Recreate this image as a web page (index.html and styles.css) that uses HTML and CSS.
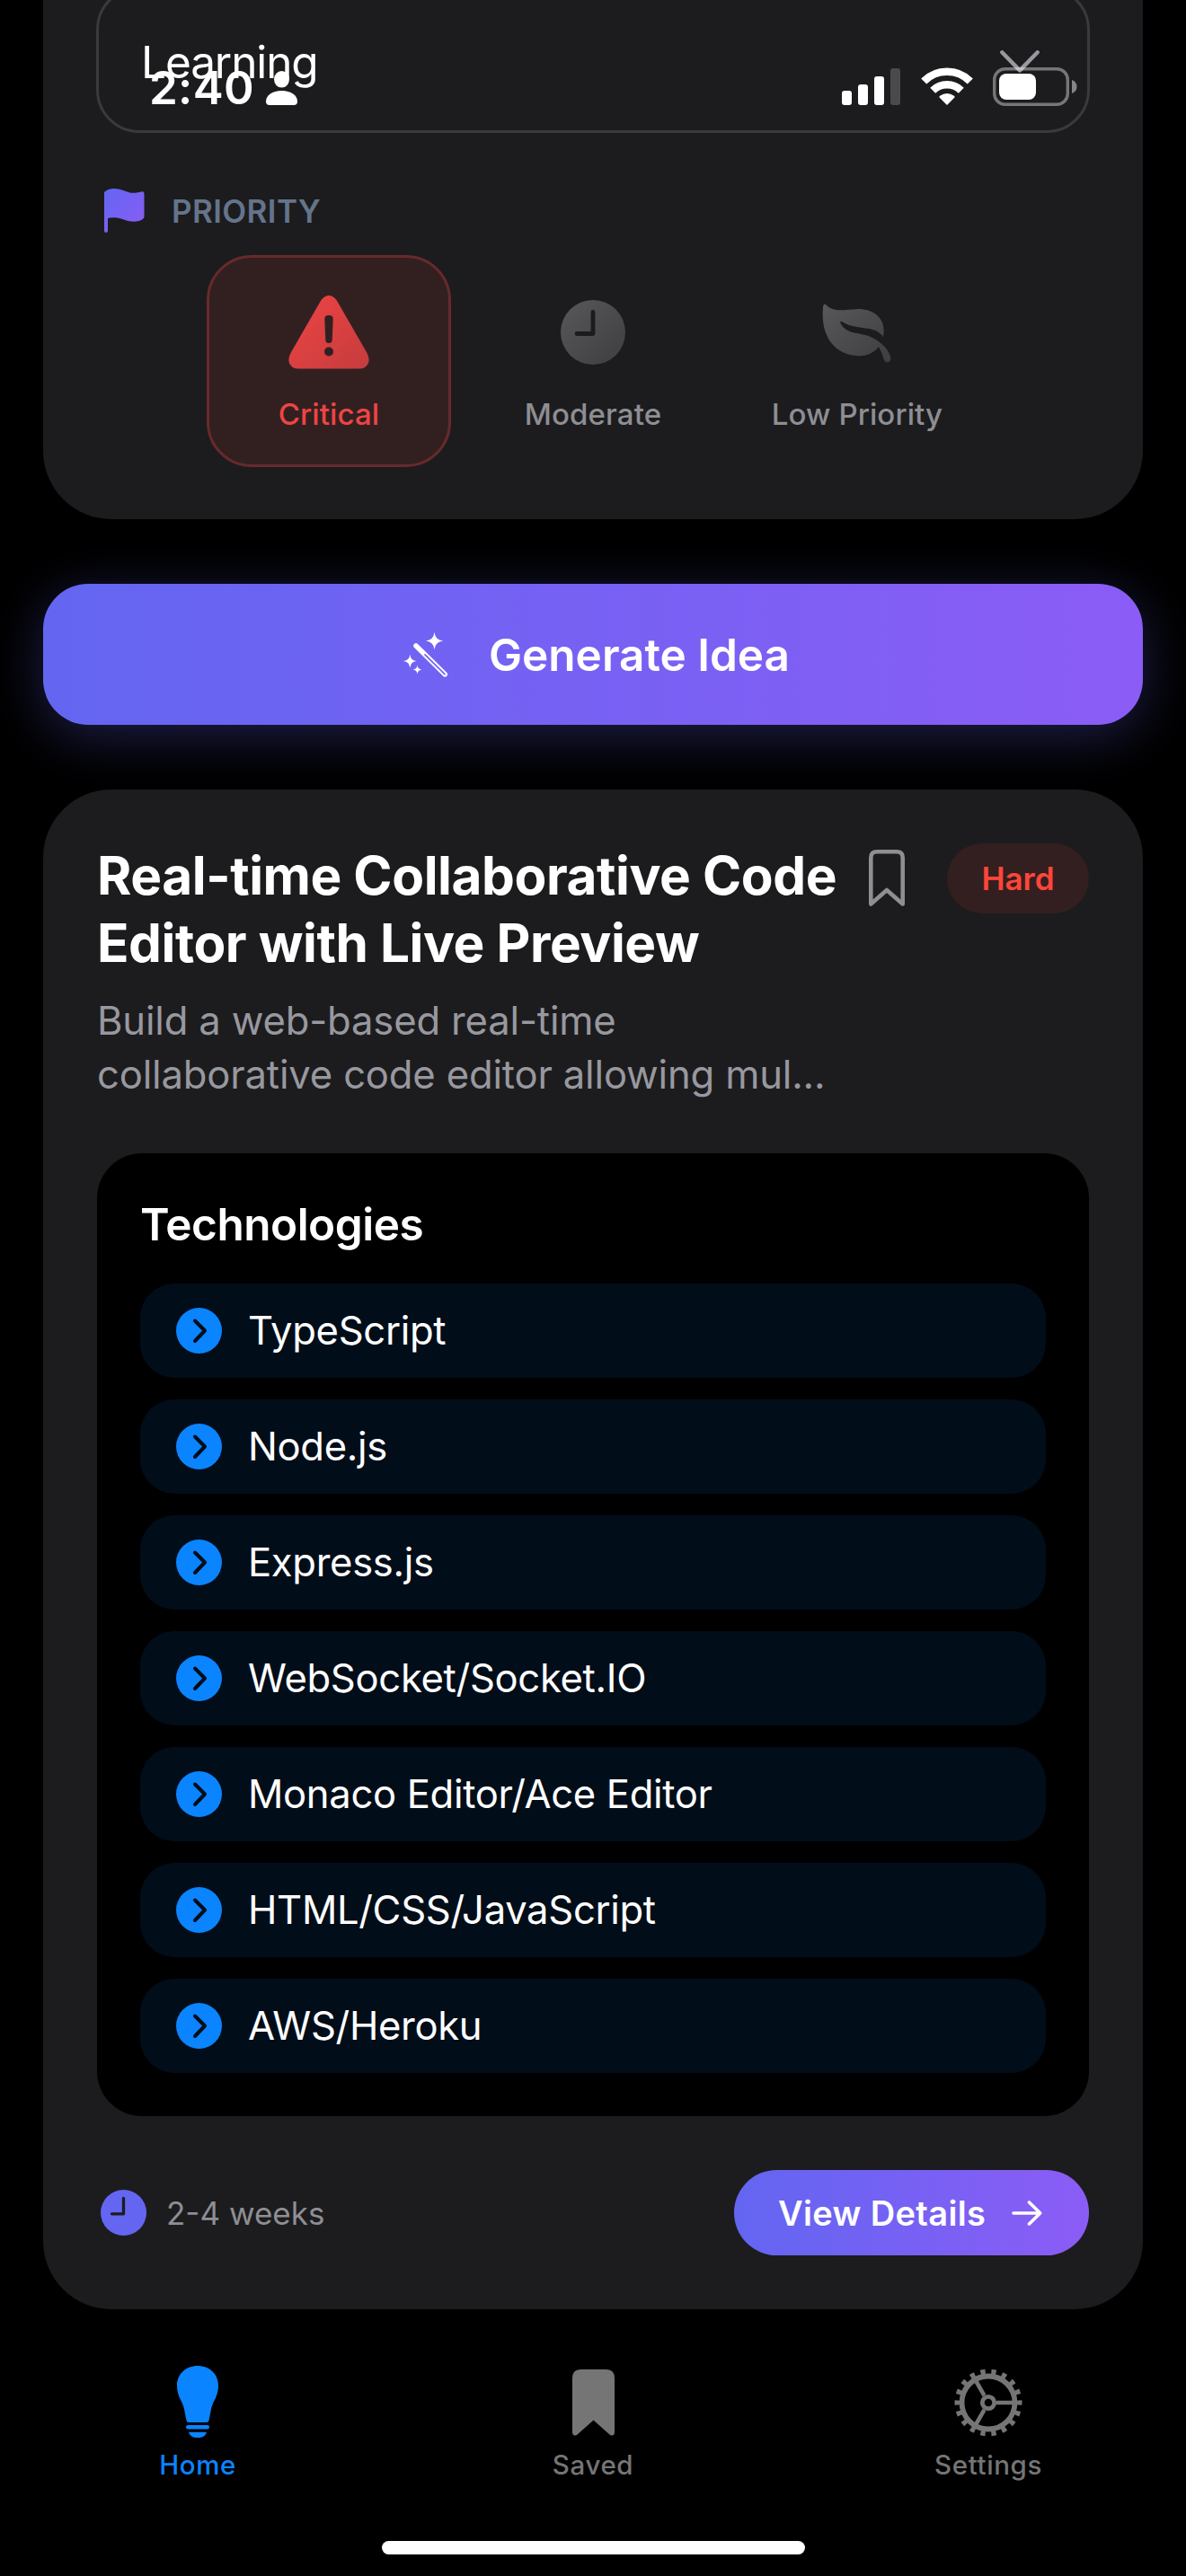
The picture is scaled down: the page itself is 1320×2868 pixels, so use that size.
FILE: index.html
```html
<!DOCTYPE html>
<html lang="en">
<head>
	<meta charset="utf-8">
	<title>Idea Generator</title>
	<meta name="viewport" content="width=device-width, initial-scale=1.0">
	<link rel="stylesheet" href="styles.css">
</head>
<body>
	<!-- shared gradients and symbols -->
	<svg class="defs" width="0" height="0">
		<defs>
			<linearGradient id="violet" x1="0" y1="0" x2="1" y2="1">
				<stop offset="0" stop-color="#6366f1"/><stop offset="1" stop-color="#8b5cf6"/>
			</linearGradient>
			<linearGradient id="red" x1="0" y1="0" x2="1" y2="1">
				<stop offset="0" stop-color="#ef4444"/><stop offset="1" stop-color="#c53c3d"/>
			</linearGradient>
			<linearGradient id="grey" x1="0" y1="0" x2="1" y2="1">
				<stop offset="0" stop-color="#58585a"/><stop offset="1" stop-color="#3e3e40"/>
			</linearGradient>
			<symbol id="go" viewBox="0 0 51 51">
				<circle cx="25.5" cy="25.5" r="25.5" fill="#0a84ff"/>
				<path d="M21 14.5L32 25.5L21 37" fill="none" stroke="#010d19" stroke-width="4" stroke-linecap="round" stroke-linejoin="round"/>
			</symbol>
		</defs>
	</svg>

	<div class="status">
		<span class="time">2:40</span>
		<svg class="person" width="35" height="38" viewBox="0 0 35 38">
			<ellipse cx="17.5" cy="9.3" rx="8.5" ry="9.3" fill="#fff"/>
			<path d="M0 34C0 27 7 22 17.5 22S35 27 35 34Q35 38 31 38H4Q0 38 0 34Z" fill="#fff"/>
		</svg>
		<svg class="signal" width="65" height="41" viewBox="0 0 65 41">
			<rect x="0" y="25" width="11" height="16" rx="3" fill="#fff"/>
			<rect x="18" y="18" width="11" height="23" rx="3" fill="#fff"/>
			<rect x="36" y="9" width="11" height="32" rx="3" fill="#fff"/>
			<rect x="54" y="0" width="11" height="41" rx="3" fill="#4a4a4c"/>
		</svg>
		<svg class="wifi" width="58" height="42" viewBox="0 0 58 42">
			<path d="M3.2 15.5A36.5 36.5 0 0 1 54.8 15.5" fill="none" stroke="#fff" stroke-width="8.6"/>
			<path d="M13.2 25.8A22.5 22.5 0 0 1 44.8 25.8" fill="none" stroke="#fff" stroke-width="8.4"/>
			<path d="M29 42L20.8 33.8Q19.8 32.8 21 31.8Q29 26 37 31.8Q38.2 32.8 37.2 33.8Z" fill="#fff"/>
		</svg>
		<svg class="battery" width="94" height="43" viewBox="0 0 94 43">
			<rect x="1.7" y="1.7" width="81.6" height="39.6" rx="12" fill="none" stroke="#fff" stroke-opacity="0.4" stroke-width="3.4"/>
			<rect x="7" y="7" width="41" height="29" rx="8" fill="#fff"/>
			<path d="M88 14Q93.5 16 93.5 21.5T88 29Z" fill="#858587"/>
		</svg>
	</div>

	<section class="form-card">
		<div class="select">
			<span>Learning</span>
			<svg width="44" height="25" viewBox="0 0 44 25">
				<path d="M2.3 2.3L22 22.4L41.7 2.3" fill="none" stroke="#98989f" stroke-width="4.4" stroke-linecap="round" stroke-linejoin="round"/>
			</svg>
		</div>
		<div class="label">
			<svg width="45" height="49" viewBox="0 0 45 49">
				<path d="M0 4C5 -1 14 -1 24 3C31 6 37 4.500 41 3.500Q44.500 2.500 44.500 6V31C44.500 36 33 39 22 34.500C14 31.500 8 32 4 33V47Q4 49 2 49T0 47Z" fill="url(#violet)"/>
			</svg>
			<span>PRIORITY</span>
		</div>
		<div class="options">
			<div class="option selected">
				<svg width="90" height="82" viewBox="0 0 90 82">
					<path d="M36.500 5Q45 -5 53.500 5L87.500 64Q91.500 72 88 77Q85 81.500 79 81.500H11Q5 81.500 2 77Q-1.500 72 2.500 64Z" fill="url(#red)"/>
					<path d="M40.300 26Q40.300 22 45 22T49.700 26L48.700 50Q48.500 53 45 53T41.300 50Z" fill="#322021"/>
					<circle cx="45" cy="62.500" r="5" fill="#322021"/>
				</svg>
				<span>Critical</span>
			</div>
			<div class="option">
				<svg width="72" height="82" viewBox="0 0 72 82">
					<circle cx="36" cy="41" r="36" fill="url(#grey)"/>
					<path d="M36 18.500V42.500H18" fill="none" stroke="#1c1c1e" stroke-width="4.800" stroke-linecap="round" stroke-linejoin="round"/>
				</svg>
				<span>Moderate</span>
			</div>
			<div class="option">
				<svg width="78" height="82" viewBox="0 -10 78 82">
					<path d="M4 0C12 9 24 6 40 5C58 5 72 16 68 36C62 28 54 27 45 26C32 24 26 22 22 19C20 18 20 20 21 22C28 34 44 31 54 36C66 42 74 50 76 58C78 65 71 66 69 62Q67 54 63 47C56 56 46 58 38 57C14 55 -2 36 1 3C1 0 3 -1 4 0Z" fill="url(#grey)"/>
				</svg>
				<span>Low Priority</span>
			</div>
		</div>
	</section>

	<button class="generate">
		<svg width="50" height="50" viewBox="0 0 50 50">
			<path d="M34.500 0Q35.500 8.500 44 9.500Q35.500 10.500 34.500 19Q33.500 10.500 25 9.500Q33.500 8.500 34.500 0Z" fill="#fff"/>
			<path d="M7.300 24.500Q8 31.300 14.500 32Q8 32.700 7.300 39.500Q6.600 32.700 0 32Q6.600 31.300 7.300 24.500Z" fill="#fff"/>
			<path d="M15.500 36.500Q16 41 20.500 41.500Q16 42 15.500 46.500Q15 42 10.500 41.500Q15 41 15.500 36.500Z" fill="#fff"/>
			<path d="M14 15L46.200 46.800" stroke="#fff" stroke-width="5.600" stroke-linecap="round"/>
			<path d="M24 24.800L46 46.600" stroke="#7561f4" stroke-width="1.700" stroke-linecap="round"/>
		</svg>
		<span>Generate Idea</span>
	</button>

	<section class="idea-card">
		<div class="idea-head">
			<div class="idea-text">
				<h2>Real-time Collaborative Code<br>Editor with Live Preview</h2>
				<p>Build a web-based real-time<br>collaborative code editor allowing mul...</p>
			</div>
			<div class="idea-actions">
				<svg width="40" height="64" viewBox="0 0 40 64">
					<path d="M2.300 60.500V9Q2.300 2.300 9 2.300H31Q37.700 2.300 37.700 9V60.500L20 45Z" fill="none" stroke="#8e8e93" stroke-width="4.600" stroke-linejoin="round"/>
				</svg>
				<span class="badge">Hard</span>
			</div>
		</div>

		<div class="tech">
			<h3>Technologies</h3>
			<ul>
				<li><svg width="51" height="51"><use href="#go"/></svg><span>TypeScript</span></li>
				<li><svg width="51" height="51"><use href="#go"/></svg><span>Node.js</span></li>
				<li><svg width="51" height="51"><use href="#go"/></svg><span>Express.js</span></li>
				<li><svg width="51" height="51"><use href="#go"/></svg><span>WebSocket/Socket.IO</span></li>
				<li><svg width="51" height="51"><use href="#go"/></svg><span>Monaco Editor/Ace Editor</span></li>
				<li><svg width="51" height="51"><use href="#go"/></svg><span>HTML/CSS/JavaScript</span></li>
				<li><svg width="51" height="51"><use href="#go"/></svg><span>AWS/Heroku</span></li>
			</ul>
		</div>

		<div class="idea-foot">
			<svg width="51" height="51" viewBox="0 0 51 51">
				<circle cx="25.500" cy="25.500" r="25.500" fill="#6466f1"/>
				<path d="M25.500 9.500V26.800H12.500" fill="none" stroke="#1c1c1e" stroke-width="3.300" stroke-linecap="round" stroke-linejoin="round"/>
			</svg>
			<span class="weeks">2-4 weeks</span>
			<button class="details">
				<span>View Details</span>
				<svg width="34" height="28" viewBox="0 0 34 28">
					<path d="M2 14H31.500M19.500 2L31.700 14L19.500 26" fill="none" stroke="#fff" stroke-width="3.600" stroke-linecap="round" stroke-linejoin="round"/>
				</svg>
			</button>
		</div>
	</section>

	<nav class="tabs">
		<a class="tab active">
			<svg width="46" height="80" viewBox="0 0 46 80">
				<path d="M23 0C36 0 46 9 46 22C46 34 40 39 38 48C37 54 36 58 35.500 61Q35 63 33 63H13Q11 63 10.500 61C10 58 9 54 8 48C6 39 0 34 0 22C0 9 10 0 23 0Z"/>
				<rect x="10" y="66" width="26" height="4.500" rx="2.200"/>
				<path d="M13 73.700H33C32 78 28 80.200 23 80.200S14 78 13 73.700Z"/>
			</svg>
			<span>Home</span>
		</a>
		<a class="tab">
			<svg width="47" height="80" viewBox="0 -4 47 80">
				<path d="M0 10Q0 0 9 0H38Q47 0 47 10V70Q46.500 75 42 73L23.500 56.500L5 73Q0.500 75 0 70Z"/>
			</svg>
			<span>Saved</span>
		</a>
		<a class="tab">
			<svg width="76" height="80" viewBox="-38 -41 76 80">
				<g fill="none" stroke="#757575">
					<circle r="29.500" stroke-width="5.800"/>
					<circle r="34" stroke-width="7" pathLength="180" stroke-dasharray="4.400 5.600" stroke-dashoffset="2.200"/>
					<circle r="6.700" stroke-width="4.800"/>
					<path d="M9 0H28M-4.500 -7.800L-14 -24.500M-4.500 7.800L-14 24.500" stroke-width="4.600"/>
				</g>
			</svg>
			<span>Settings</span>
		</a>
	</nav>
	<div class="home-bar"></div>
</body>
</html>
```

FILE: styles.css
```css
* {
	box-sizing: border-box;
	margin: 0;
	padding: 0;
}
body {
	position: relative;
	display: flex;
	flex-direction: column;
	width: 1320px;
	height: 2868px;
	overflow: hidden;
	background-color: #000;
	color: #fff;
	font-family: Inter, "Liberation Sans", sans-serif;
	white-space: nowrap;
}
svg {
	display: block;
	flex: none;
}
button {
	border: none;
	color: #fff;
	font-family: inherit;
	background: linear-gradient(90deg, #6366f1, #8b5cf6);
}
.defs {
	position: absolute;
}

/* status bar floats over the scrolled form */
.status {
	position: absolute;
	top: 75px;
	left: 0;
	z-index: 2;
	display: flex;
	width: 1320px;
	height: 43px;
	padding: 0 121px 0 166px;
}
.time {
	width: 130px;
	font-size: 51px;
	font-weight: 600;
	letter-spacing: 0.3px;
	line-height: 46px;
}
.person {
	margin-top: 4px;
}
.signal {
	margin: 1px 23px 0 auto;
}
.wifi {
	margin-right: 22px;
}

.form-card {
	display: flex;
	flex: none;
	flex-direction: column;
	width: 1224px;
	height: 578px;
	margin: 0 48px;
	padding: 0 59px;
	background-color: #1c1c1e;
	border-radius: 0 0 76px 76px;
}
.select {
	display: flex;
	flex: none;
	justify-content: space-between;
	align-items: center;
	height: 163px;
	margin-top: -15px;
	padding: 4px 53px 0 47px;
	border: 3px solid #3a3a3c;
	border-radius: 48px;
	font-size: 49.5px;
	letter-spacing: -1.1px;
}
.label {
	display: flex;
	align-items: center;
	height: 49px;
	margin: 62px 0 25px 9px;
	gap: 30px;
	color: #64748b;
	font-size: 35px;
	font-weight: 600;
	letter-spacing: 0.4px;
}
.options {
	display: flex;
	justify-content: center;
	gap: 22px;
}
.option {
	display: flex;
	flex-direction: column;
	align-items: center;
	width: 272px;
	height: 236px;
	padding-top: 42px;
	gap: 30px;
	border: 3px solid transparent;
	border-radius: 50px;
	color: #8e8e93;
	font-size: 33px;
	font-weight: 500;
	letter-spacing: 0.1px;
	line-height: 40px;
}
.selected {
	background-color: #322021;
	border-color: #682a2c;
	color: #ef4444;
}

.generate {
	display: flex;
	flex: none;
	justify-content: center;
	align-items: center;
	width: 1224px;
	height: 157px;
	margin: 72px 48px;
	padding-left: 8px;
	gap: 45px;
	border-radius: 50px;
	box-shadow: 0 12px 60px rgba(99, 102, 241, 0.3);
	font-size: 49.5px;
	font-weight: 600;
}

.idea-card {
	flex: none;
	width: 1224px;
	height: 1692px;
	margin: 0 48px;
	padding: 58px 60px 0;
	background-color: #1c1c1e;
	border-radius: 76px;
}
.idea-head {
	display: flex;
	justify-content: space-between;
}
h2 {
	font-size: 58.5px;
	font-weight: 700;
	letter-spacing: -0.43px;
	line-height: 75px;
}
.idea-text p {
	margin-top: 20px;
	color: #98989f;
	font-size: 43.6px;
	letter-spacing: -0.17px;
	line-height: 60px;
}
.idea-actions {
	display: flex;
	align-items: center;
	height: 78px;
	margin-top: 2px;
	gap: 47px;
}
.badge {
	width: 158px;
	height: 78px;
	border-radius: 39px;
	background-color: #331f1f;
	color: #ff453a;
	font-size: 35px;
	font-weight: 600;
	line-height: 78px;
	text-align: center;
}

.tech {
	height: 1072px;
	margin-top: 57px;
	padding: 48px;
	background-color: #000;
	border-radius: 50px;
}
h3 {
	margin-bottom: 35px;
	font-size: 49.5px;
	font-weight: 600;
	letter-spacing: -0.5px;
	line-height: 62px;
}
ul {
	display: flex;
	flex-direction: column;
	gap: 24px;
	list-style: none;
}
li {
	display: flex;
	align-items: center;
	height: 105px;
	padding-left: 40px;
	gap: 29px;
	background-color: #010d19;
	border-radius: 38px;
	font-size: 43.6px;
	letter-spacing: -0.33px;
}

.idea-foot {
	display: flex;
	align-items: center;
	margin-top: 60px;
	padding-left: 4px;
}
.weeks {
	margin-left: 22px;
	color: #8e8e93;
	font-size: 35px;
}
.details {
	display: flex;
	align-items: center;
	width: 395px;
	height: 95px;
	margin-left: auto;
	padding: 0 52px 0 49px;
	justify-content: space-between;
	border-radius: 48px;
	font-size: 38px;
	font-weight: 600;
	letter-spacing: 0.35px;
}

.tabs {
	display: flex;
	flex: none;
	width: 1320px;
	height: 258px;
	padding-top: 63px;
}
.tab {
	display: flex;
	flex-direction: column;
	align-items: center;
	width: 440px;
	gap: 12px;
	color: #757575;
	fill: #757575;
	font-size: 29.5px;
	font-weight: 500;
	letter-spacing: 0.6px;
	line-height: 36px;
}
.active {
	color: #0a84ff;
	fill: #0a84ff;
}
.home-bar {
	flex: none;
	width: 471px;
	height: 15px;
	margin: 0 auto;
	background-color: #fff;
	border-radius: 8px;
}
```
